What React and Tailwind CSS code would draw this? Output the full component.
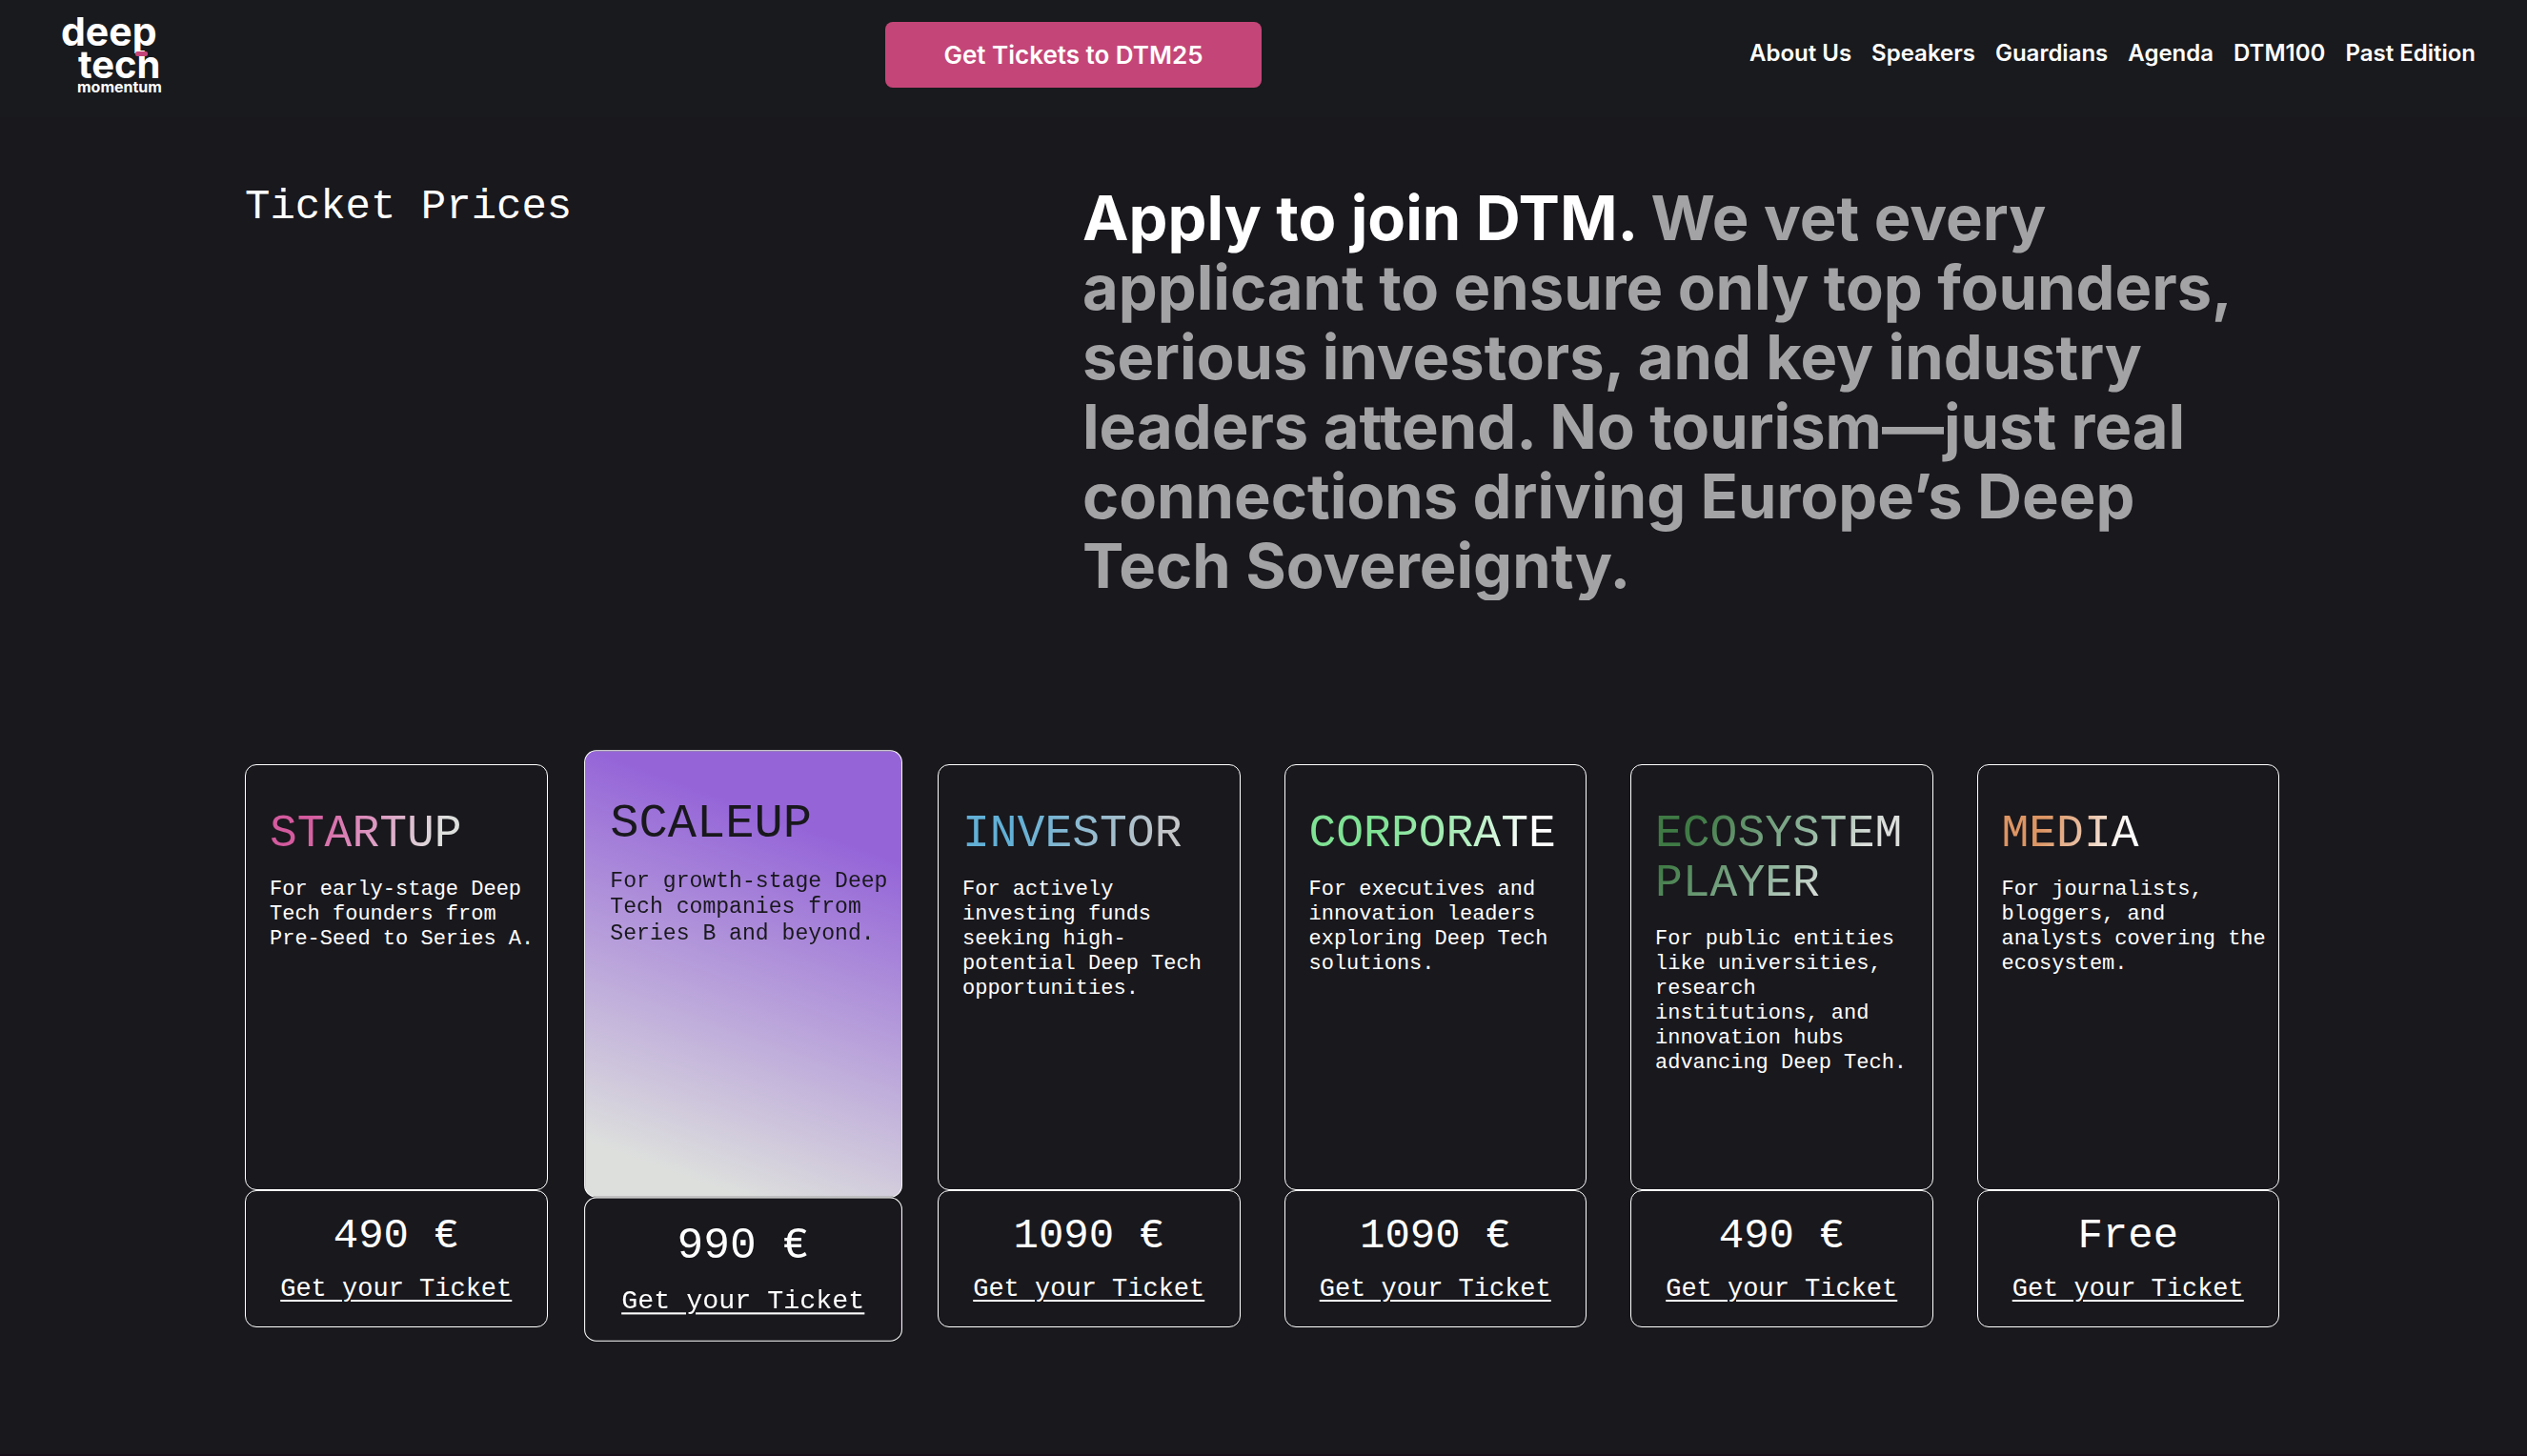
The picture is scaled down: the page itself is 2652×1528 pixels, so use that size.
const navLinks = ['About Us', 'Speakers', 'Guardians', 'Agenda', 'DTM100', 'Past Edition']

const tickets = [
  {
    title: 'STARTUP',
    text: 'For early-stage Deep Tech founders from Pre-Seed to Series A.',
    price: '490 €',
    gradient: 'bg-linear-[110deg] from-[#d45a9e] from-20% via-[#dd93bf] via-50% to-[#dddfdd] to-85%',
  },
  {
    title: 'SCALEUP',
    text: 'For growth-stage Deep Tech companies from Series B and beyond.',
    price: '990 €',
    featured: true,
  },
  {
    title: 'INVESTOR',
    text: 'For actively investing funds seeking high-potential Deep Tech opportunities.',
    price: '1090 €',
    gradient: 'bg-linear-[110deg] from-[#62b0d6] from-25% to-[#c5c6c8] to-90%',
  },
  {
    title: 'CORPORATE',
    text: 'For executives and innovation leaders exploring Deep Tech solutions.',
    price: '1090 €',
    gradient: 'bg-linear-[110deg] from-[#7fe294] from-30% via-[#b5efc2] via-65% to-white to-85%',
  },
  {
    title: 'ECOSYSTEM PLAYER',
    text: 'For public entities like universities, research institutions, and innovation hubs advancing Deep Tech.',
    price: '490 €',
    gradient: 'bg-linear-[130deg] from-[#3f7a45] from-15% via-[#8fb49c] via-48% to-[#dddfdd] to-68%',
  },
  {
    title: 'MEDIA',
    text: 'For journalists, bloggers, and analysts covering the ecosystem.',
    price: 'Free',
    gradient: 'bg-linear-[110deg] from-[#dd9563] from-30% via-[#e9c0a4] via-58% to-white to-85%',
  },
]

function Logo() {
  return (
    <svg viewBox="0 0 110 90" className="w-[110px] h-[90px] overflow-visible" role="img" aria-label="deep tech momentum">
      <g fill="#fff" fontFamily="Inter, sans-serif" fontWeight="700">
        <text x="0" y="33" fontSize="41">deep</text>
        <text x="18" y="67" fontSize="40">tech</text>
        <text x="17" y="82" fontSize="16">momentum</text>
      </g>
      <rect x="78" y="39" width="13" height="5" rx="2" fill="#c44678" />
    </svg>
  )
}

function Navbar() {
  return (
    <header className="grid grid-cols-[865fr_auto_1274fr] items-start h-[123px] bg-[#191a1d] pl-16 pr-[54px]">
      <a href="#" className="mt-[15px] justify-self-start">
        <Logo />
      </a>
      <button className="mt-[23px] w-[395px] h-[69px] rounded-lg bg-[#c44678] text-[26px] font-semibold text-white">
        Get Tickets to DTM25
      </button>
      <nav className="mt-10 flex justify-end gap-[21px] text-2xl font-semibold text-white whitespace-nowrap">
        {navLinks.map((link) => (
          <a key={link} href="#">{link}</a>
        ))}
      </nav>
    </header>
  )
}

function TicketCard({ title, text, price, gradient, featured }) {
  return (
    <article className={`flex flex-col font-['Liberation_Mono',monospace] ${featured ? 'scale-105' : ''}`}>
      <div
        className={`h-[447px] rounded-xl border border-white pl-[25px] pr-2 pt-[46px]
          ${featured ? 'bg-linear-[20deg] from-[#dddfdd] from-10% to-[#9565d8] to-80% text-[#19181d]' : 'text-white'}`}
      >
        <h2 className={`w-fit text-[48px] leading-[52px] ${gradient ? `${gradient} bg-clip-text text-transparent` : ''}`}>
          {title}
        </h2>
        <p className="mt-5 text-[22px] leading-[26px]">{text}</p>
      </div>
      <div className="h-36 rounded-xl border border-white flex flex-col items-center text-white">
        <p className="mt-5 text-[44px] leading-[54px]">{price}</p>
        <a href="#" className="mt-3 text-[27px] leading-[34px] underline underline-offset-4">Get your Ticket</a>
      </div>
    </article>
  )
}

export default function App() {
  return (
    <div className="min-h-screen bg-[#19181d] font-['Inter',sans-serif] border-b-2 border-[#17101a]">
      <Navbar />
      <main className="pl-[257px] pr-[260px] pt-[69px] pb-[130px]">
        <section className="grid grid-cols-[879px_1fr]">
          <h1 className="font-['Liberation_Mono',monospace] text-[44px] leading-[50px] text-white">Ticket Prices</h1>
          <p className="text-[65px] leading-[73px] font-bold text-[#a3a3a5] overflow-hidden">
            <span className="text-white">Apply to join DTM.</span> We vet every applicant to ensure only top founders,
            serious investors, and key industry leaders attend. No tourism—just real connections driving Europe’s Deep
            Tech Sovereignty.
          </p>
        </section>
        <section className="mt-[172px] grid grid-cols-6 gap-[46px]">
          {tickets.map((ticket) => (
            <TicketCard key={ticket.title} {...ticket} />
          ))}
        </section>
      </main>
    </div>
  )
}
